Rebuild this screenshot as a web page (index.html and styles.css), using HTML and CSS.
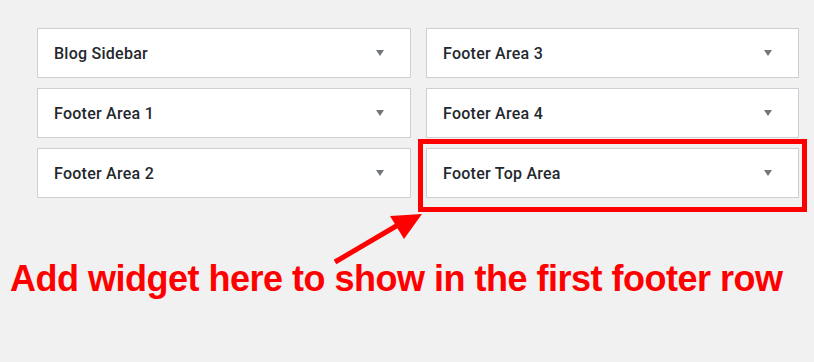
FILE: index.html
```html
<!DOCTYPE html>
<html>

<head>
    <title>Widget Areas</title>
    <link rel="stylesheet" href="styles.css">
</head>

<body>
    <div class="page">
        <div class="widget-grid">
            <div class="sidebar">
                <h2>Blog Sidebar</h2>
                <span class="toggle"></span>
            </div>
            <div class="sidebar">
                <h2>Footer Area 3</h2>
                <span class="toggle"></span>
            </div>
            <div class="sidebar">
                <h2>Footer Area 1</h2>
                <span class="toggle"></span>
            </div>
            <div class="sidebar">
                <h2>Footer Area 4</h2>
                <span class="toggle"></span>
            </div>
            <div class="sidebar">
                <h2>Footer Area 2</h2>
                <span class="toggle"></span>
            </div>
            <div class="sidebar highlighted">
                <h2>Footer Top Area</h2>
                <span class="toggle"></span>
            </div>
        </div>

        <!-- annotation arrow -->
        <svg class="arrow" width="100" height="60" viewBox="0 0 100 60">
            <line x1="3" y1="50" x2="66" y2="13" stroke="#ff0000" stroke-width="5" />
            <polygon points="90,2 58,4 72,27" fill="#ff0000" />
        </svg>

        <p class="note">Add widget here to show in the first footer row</p>
    </div>
</body>

</html>
```

FILE: styles.css
```css
/* Widget area screenshot */
body {
    background-color: #f1f1f1;
    margin: 0;
    padding: 0;
    font-family: Roboto, "Noto Sans", sans-serif;
}

.page {
    position: relative;
    width: 814px;
    height: 362px;
    padding: 28px 15px 0 37px;
    box-sizing: border-box;
}

.widget-grid {
    display: grid;
    grid-template-columns: 374px 373px;
    column-gap: 15px;
    row-gap: 10px;
}

.sidebar {
    position: relative;
    display: flex;
    justify-content: space-between;
    align-items: center;
    height: 50px;
    padding: 0 26px 0 16px;
    box-sizing: border-box;
    background-color: #ffffff;
    border: 1px solid #ccd0d4;
}

.sidebar h2 {
    margin: 0;
    font-size: 16px;
    font-weight: 500;
    letter-spacing: 0.25px;
    color: #23282d;
}

.toggle {
    width: 0;
    height: 0;
    border-left: 4px solid transparent;
    border-right: 4px solid transparent;
    border-top: 6px solid #72777c;
}

.highlighted::after {
    content: "";
    position: absolute;
    left: -9px;
    top: -10px;
    right: -9px;
    bottom: -15px;
    border: 5px solid #ff0000;
}

.arrow {
    position: absolute;
    left: 332px;
    top: 212px;
}

.note {
    margin: 60px 0 0 -27px;
    font-family: "Liberation Sans", Arial, sans-serif;
    font-size: 36px;
    font-weight: bold;
    letter-spacing: -0.5px;
    color: #ff0000;
    white-space: nowrap;
}
```
